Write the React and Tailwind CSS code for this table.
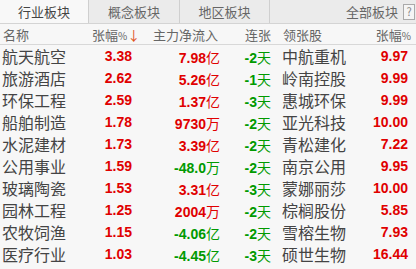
const rows = [
  ["航天航空", "3.38", "7.98", "亿", "r", "-2", "中航重机", "9.97"],
  ["旅游酒店", "2.62", "5.26", "亿", "r", "-1", "岭南控股", "9.99"],
  ["环保工程", "2.59", "1.37", "亿", "r", "-3", "惠城环保", "9.99"],
  ["船舶制造", "1.78", "9730", "万", "r", "-2", "亚光科技", "10.00"],
  ["水泥建材", "1.73", "3.39", "亿", "r", "-2", "青松建化", "7.22"],
  ["公用事业", "1.59", "-48.0", "万", "g", "-2", "南京公用", "9.95"],
  ["玻璃陶瓷", "1.53", "3.31", "亿", "r", "-3", "蒙娜丽莎", "10.00"],
  ["园林工程", "1.25", "2004", "万", "r", "-2", "棕榈股份", "5.85"],
  ["农牧饲渔", "1.15", "-4.06", "亿", "g", "-2", "雪榕生物", "7.93"],
  ["医疗行业", "1.03", "-4.45", "亿", "g", "-3", "硕世生物", "16.44"],
];

const cjk = "font-['Noto_Sans_CJK_SC',sans-serif]";
const num = "font-['Liberation_Sans',Arial,sans-serif] font-bold";
const grid = "grid grid-cols-[90px_40px_88px_51px_1fr_auto] pl-[2px] pr-[8px] items-center";

export default function App() {
  return (
    <div className={`w-[416px] h-[269px] bg-[#f7f7f7] overflow-hidden ${cjk}`}>
      <div className="flex h-[24px] border-b border-[#d4d4d4] bg-[#ebebeb] text-[13px] text-[#444] leading-none">
        <div className="w-[89px] flex items-center justify-center bg-[#f8f8f8] border-r border-[#cfcfcf]">行业板块</div>
        <div className="w-[91px] flex items-center justify-center text-[#666] border-r border-[#cfcfcf]">概念板块</div>
        <div className="w-[90px] flex items-center justify-center text-[#666] border-r border-[#cfcfcf]">地区板块</div>
        <div className="flex-1 flex items-center justify-end pr-[1px] text-[#666]">
          <span>全部板块</span>
          <span className="ml-[5px] w-[12px] h-[16px] border border-[#aaa] flex items-center justify-center text-[11px] text-[#888] bg-[#f5f5f5]">?</span>
        </div>
      </div>
      <div className={`${grid} h-[21px] border-b border-[#d8d8d8] text-[13px] text-[#666] leading-none`}>
        <div className="pl-[1px]">名称</div>
        <div className="text-right whitespace-nowrap pr-[3px]">张幅<span className="text-[10px]">%</span><span className="text-[#e0501c]">↓</span></div>
        <div className="text-right whitespace-nowrap pr-[2px]">主力净流入</div>
        <div className="text-right">连张</div>
        <div className="pl-[12px]">领张股</div>
        <div className="text-right -mr-[3px]">张幅<span className="text-[10px]">%</span></div>
      </div>
      {rows.map((r, i) => {
        const c = r[4] === "r" ? "text-[#e00000]" : "text-[#009a00]";
        return (
          <div key={i} className={`${grid} h-[22px] leading-none`}>
            <div className="text-[16px] text-[#444]">{r[0]}</div>
            <div className={`text-right text-[14px] text-[#e00000] ${num}`}>{r[1]}</div>
            <div className={`text-right whitespace-nowrap ${c}`}>
              <span className={`text-[14px] ${num}`}>{r[2]}</span>
              <span className="text-[14px]">{r[3]}</span>
            </div>
            <div className="text-right whitespace-nowrap text-[#009a00]">
              <span className={`text-[14px] ${num}`}>{r[5]}</span>
              <span className="text-[14px]">天</span>
            </div>
            <div className="pl-[11px] text-[16px] text-[#444]">{r[6]}</div>
            <div className={`text-right text-[14px] text-[#e00000] ${num}`}>{r[7]}</div>
          </div>
        );
      })}
    </div>
  );
}
